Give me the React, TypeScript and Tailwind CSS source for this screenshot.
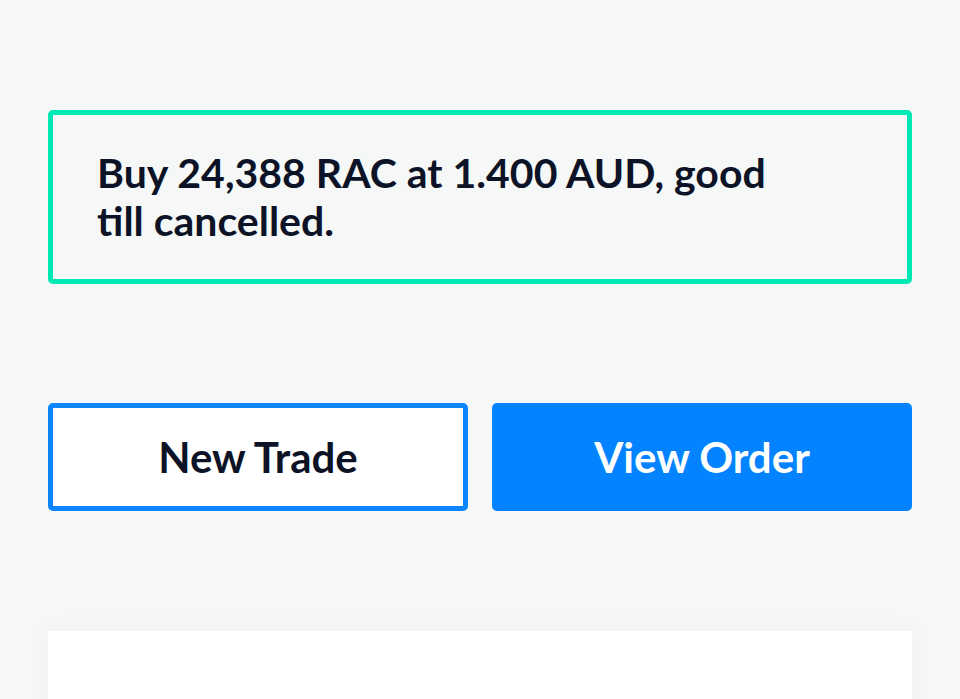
export default function App() {
  return (
    <div
      className="h-[699px] overflow-hidden bg-[#f6f8f8] px-12 pt-[110px] text-[#0d1326]"
      style={{ fontFamily: 'Lato, "Noto Sans", sans-serif' }}
    >
      <div className="rounded-[5px] border-[5px] border-[#00e8b4] pl-[44px] pt-[34px] pb-[34px]">
        <p className="w-[720px] text-[41px] font-bold leading-[48px]">
          Buy 24,388 RAC at 1.400 AUD, good till cancelled.
        </p>
      </div>

      <div className="mt-[119px] grid grid-cols-2 gap-6">
        <button className="h-[108px] rounded-[5px] border-[5px] border-[#0a84ff] bg-white text-[42px] font-bold text-[#0d1326]">
          New Trade
        </button>
        <button className="h-[108px] rounded-[5px] bg-[#0383ff] text-[42px] font-bold text-white">
          View Order
        </button>
      </div>

      <div className="mt-[120px] h-[200px] bg-white shadow-[0_0_24px_rgba(0,0,0,0.04)]" />
    </div>
  )
}
